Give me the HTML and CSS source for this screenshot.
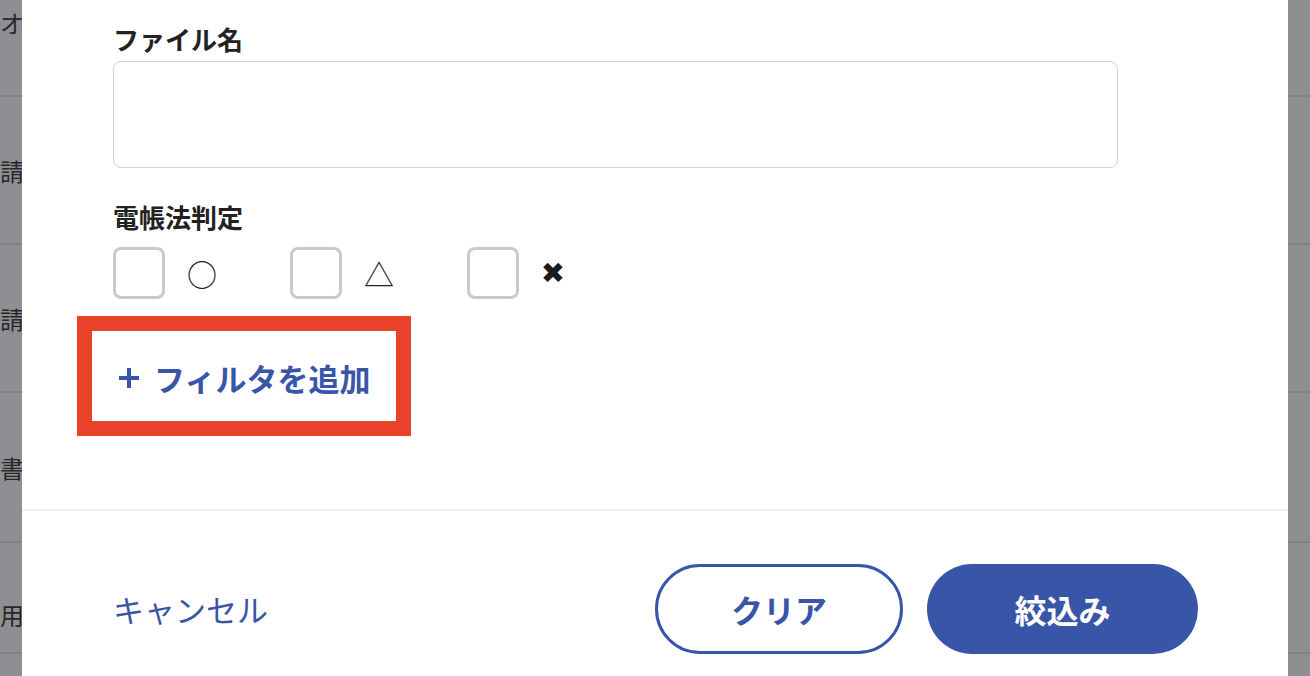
FILE: index.html
```html
<!DOCTYPE html>
<html lang="ja">
<head>
    <meta charset="UTF-8">
    <meta name="viewport" content="width=device-width, initial-scale=1.0">
    <title>絞込み</title>
    <link rel="stylesheet" href="styles.css">
</head>
<body>
    <!-- list behind the dialog -->
    <div class="doc-list">
        <div class="doc-row">オオ</div>
        <div class="doc-row">請求書</div>
        <div class="doc-row">請求書</div>
        <div class="doc-row doc-row-wide">書類</div>
        <div class="doc-row doc-row-last">用紙</div>
    </div>

    <div class="filter-modal">
        <div class="modal-body">
            <div class="form-group">
                <label class="field-label" for="fileName">ファイル名</label>
                <input type="text" id="fileName" name="fileName">
            </div>

            <div class="form-group judge-group">
                <span class="field-label">電帳法判定</span>
                <div class="judge-options">
                    <label class="judge-option">
                        <input type="checkbox" name="judge" value="ok">
                        <span class="check-box"></span>
                        <span class="judge-mark">○</span>
                    </label>
                    <label class="judge-option">
                        <input type="checkbox" name="judge" value="partial">
                        <span class="check-box"></span>
                        <span class="judge-mark">△</span>
                    </label>
                    <label class="judge-option">
                        <input type="checkbox" name="judge" value="ng">
                        <span class="check-box"></span>
                        <span class="judge-mark judge-mark-ng">✖</span>
                    </label>
                </div>
            </div>

            <div class="add-filter-wrap">
                <button type="button" class="add-filter-btn">
                    <svg class="plus-icon" width="24" height="24" viewBox="0 0 24 24">
                        <path d="M12 2v20M2 12h20" stroke="currentColor" stroke-width="4" fill="none"/>
                    </svg>
                    フィルタを追加
                </button>
                <span class="highlight-frame"></span>
            </div>
        </div>

        <div class="modal-footer">
            <a href="#" class="cancel-link">キャンセル</a>
            <div class="footer-actions">
                <button type="button" class="btn btn-outline">クリア</button>
                <button type="button" class="btn btn-primary">絞込み</button>
            </div>
        </div>
    </div>
</body>
</html>
```

FILE: styles.css
```css
* {
    margin: 0;
    padding: 0;
    box-sizing: border-box;
    font-family: "Noto Sans CJK JP", "Noto Sans", sans-serif;
}

html, body {
    width: 1310px;
    height: 676px;
    overflow: hidden;
}

body {
    position: relative;
    background-color: #8e8f93;
}

/* dimmed list in the background */
.doc-list {
    display: flex;
    flex-direction: column;
    margin-top: -51px;
}

.doc-row {
    height: 148px;
    display: flex;
    align-items: center;
    border-bottom: 2px solid #808185;
    font-size: 24px;
    color: #26272a;
    white-space: nowrap;
}

.doc-row-wide {
    height: 150px;
}

.doc-row-last {
    height: 111px;
    padding-top: 33px;
}

/* dialog */
.filter-modal {
    position: absolute;
    top: 0;
    left: 22px;
    width: 1266px;
    height: 700px;
    background-color: #fff;
}

.modal-body {
    padding: 21px 91px 112px;
}

.field-label {
    display: block;
    font-size: 26px;
    line-height: 36px;
    font-weight: 700;
    color: #222;
}

.form-group input[type="text"] {
    display: block;
    width: 1005px;
    height: 107px;
    margin-top: 4px;
    border: 1px solid #cbd0da;
    border-radius: 8px;
    padding: 0 16px;
    font-size: 26px;
}

.form-group input[type="text"]:focus {
    outline: none;
    border-color: #3955a7;
}

.judge-group {
    margin-top: 31px;
}

.judge-options {
    display: flex;
    gap: 75px;
    margin-top: 12px;
}

.judge-option {
    display: flex;
    align-items: center;
    gap: 22px;
    cursor: pointer;
}

.judge-option input {
    display: none;
}

.check-box {
    flex: none;
    width: 52px;
    height: 52px;
    border: 3px solid #c6cbd3;
    border-radius: 8px;
}

.judge-option input:checked + .check-box {
    background-color: #3955a7;
    border-color: #3955a7;
}

.judge-mark {
    width: 28px;
    text-align: center;
    font-size: 30px;
    line-height: 40px;
    font-weight: 400;
    color: #222;
}

.judge-mark-ng {
    font-family: "DejaVu Sans", sans-serif;
    font-size: 29px;
    color: #1a1a1a;
    margin-left: -2px;
}

.add-filter-wrap {
    position: relative;
    margin-top: 58px;
}

.add-filter-btn {
    display: inline-flex;
    align-items: center;
    gap: 13px;
    height: 40px;
    padding-left: 4px;
    background: none;
    border: none;
    font-size: 31px;
    font-weight: 700;
    color: #3955a7;
    cursor: pointer;
}

.plus-icon {
    margin-top: 2px;
}

/* red call-out around the add button */
.highlight-frame {
    position: absolute;
    left: -36px;
    top: -41px;
    width: 334px;
    height: 120px;
    border: 15px solid #e8422a;
    pointer-events: none;
}

.modal-footer {
    display: flex;
    justify-content: space-between;
    align-items: center;
    padding: 53px 90px 0 91px;
    border-top: 2px solid #eceef2;
}

.cancel-link {
    font-size: 31px;
    color: #3955a7;
    text-decoration: none;
    margin-top: -2px;
}

.footer-actions {
    display: flex;
    gap: 24px;
}

.btn {
    height: 90px;
    border-radius: 45px;
    font-size: 32px;
    font-weight: 700;
    cursor: pointer;
}

.btn-outline {
    width: 248px;
    background-color: #fff;
    border: 3px solid #3955a7;
    color: #3955a7;
}

.btn-primary {
    width: 271px;
    background-color: #3955a7;
    border: none;
    color: #fff;
}
```
